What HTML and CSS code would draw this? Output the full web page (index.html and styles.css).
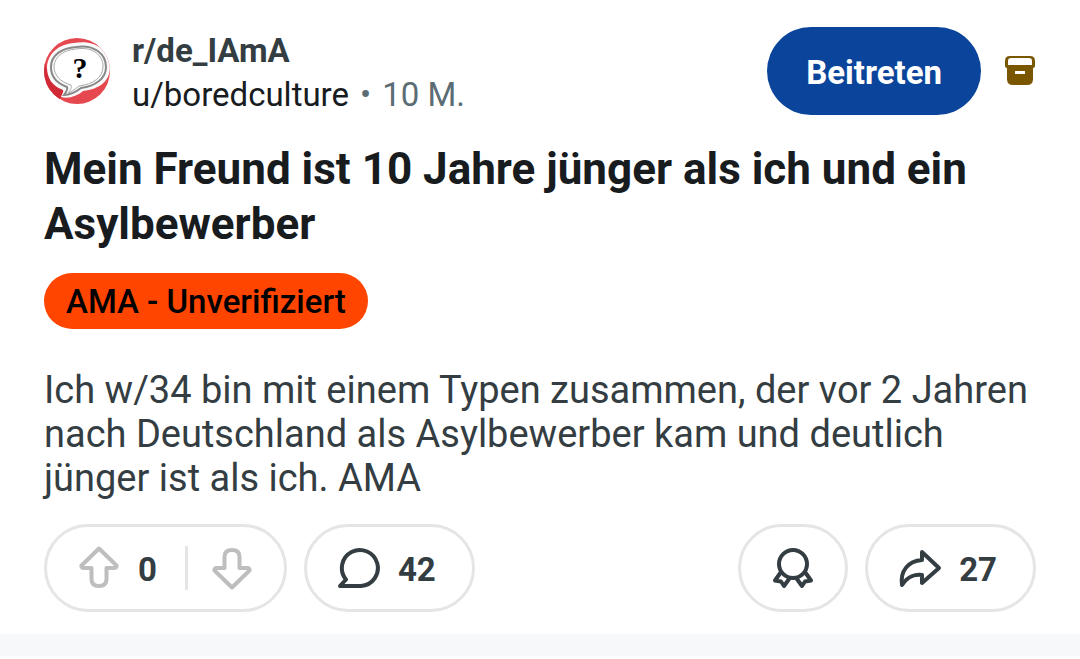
FILE: index.html
```html
<!DOCTYPE html>
<html lang="de">

<head>
    <meta charset="UTF-8">
    <meta name="viewport" content="width=device-width, initial-scale=1.0">
    <title>r/de_IAmA</title>
    <link rel="stylesheet" href="styles.css">
</head>

<body>
    <article class="post">
        <header class="post-header">
            <svg class="avatar" viewBox="0 0 66 66" aria-hidden="true">
                <defs>
                    <clipPath id="avatarClip"><circle cx="33" cy="33" r="33" /></clipPath>
                </defs>
                <g clip-path="url(#avatarClip)">
                    <rect width="66" height="66" fill="#e5484f" />
                    <path d="M0 18 Q2 44 20 52 L14 66 H0 Z" fill="#cf2a36" />
                    <path d="M30 5 C50 1 66 12 66 29 C66 43 56 51 39 53 C33 58 25 61 17 59 C18 56 20 54 19 52 C8 48 3 40 3 29 C4 15 15 6 30 5 Z" fill="#fafafa" />
                    <path d="M32 9 C50 6 62 16 62 29 C62 41 51 48 37 50 C32 54 27 57 20 57 C23 53 24 51 23 49 C12 45 7 38 7 29 C7 17 18 10 32 9 Z" fill="none" stroke="#888" stroke-width="2" />
                    <path d="M32 11 C49 8 59 18 59 28 C59 40 49 46 35 48 C30 52 27 54 24 55 C27 52 28 49 27 47 C16 44 10 37 10 28 C11 18 20 12 32 11 Z" fill="#fff" stroke="#aaa" stroke-width="1" />
                </g>
                <text class="avatar-mark" x="36" y="40" text-anchor="middle">?</text>
            </svg>
            <div class="post-meta">
                <a class="community" href="#">r/de_IAmA</a>
                <div class="byline">
                    <a class="author" href="#">u/boredculture</a>
                    <span class="dot">•</span>
                    <span class="age">10 M.</span>
                </div>
            </div>
            <button class="join">Beitreten</button>
            <svg class="archive" viewBox="0 0 30 30" aria-label="Archiviert">
                <path fill="#7a5600" fill-rule="evenodd" d="M5 0 H25 Q30 0 30 5 V10 Q30 12 28 12 V23 Q28 29 22 29 H8 Q2 29 2 23 V12 Q0 12 0 10 V5 Q0 0 5 0 Z M6 2 Q3 2 3 5 V9 H27 V5 Q27 2 24 2 Z M10 15 V18 H20 V15 Z" />
            </svg>
        </header>

        <h1 class="title">Mein Freund ist 10 Jahre jünger als ich und ein Asylbewerber</h1>
        <span class="flair">AMA - Unverifiziert</span>
        <p class="text">Ich w/34 bin mit einem Typen zusammen, der vor 2 Jahren nach Deutschland als Asylbewerber kam und deutlich jünger ist als ich. AMA</p>

        <footer class="actions">
            <div class="pill votes">
                <button class="vote" aria-label="Upvote">
                    <svg class="icon" viewBox="0 0 44 44">
                        <path d="M22 2.500 L39.500 19.500 Q40 22 37 22 H29.500 V33 Q29.500 40 22 40 Q14.500 40 14.500 33 V22 H7 Q4 22 4.500 19.500 Z" />
                    </svg>
                </button>
                <span class="count">0</span>
                <span class="divider"></span>
                <button class="vote" aria-label="Downvote">
                    <svg class="icon" viewBox="0 0 44 44">
                        <path d="M22 41.500 L39.500 24.500 Q40 22 37 22 H29.500 V11 Q29.500 4 22 4 Q14.500 4 14.500 11 V22 H7 Q4 22 4.500 24.500 Z" />
                    </svg>
                </button>
            </div>
            <button class="pill comments">
                <svg class="icon" viewBox="0 0 44 44" aria-hidden="true">
                    <path d="M24 40 H3 L9 33.500 A18 18 0 1 1 24 40 Z" />
                </svg>
                <span class="count">42</span>
            </button>
            <button class="pill award" aria-label="Auszeichnen">
                <svg class="icon" viewBox="0 0 44 44">
                    <circle cx="22" cy="18" r="14" />
                    <path d="M10 26 L4 34.500 L10 35.500 L13 40 L19.500 31 M34 26 L40 34.500 L34 35.500 L31 40 L24.500 31" />
                </svg>
            </button>
            <button class="pill share">
                <svg class="icon" viewBox="0 0 44 44" aria-hidden="true">
                    <path d="M24 6 L41 22 L24 37 V29 C17 28 9 31 4 39 C2 25 10 15 24 14 Z" />
                </svg>
                <span class="count">27</span>
            </button>
        </footer>
    </article>
    <div class="separator"></div>
</body>

</html>
```
FILE: styles.css
```css
* {
    box-sizing: border-box;
}

body {
    margin: 0;
    background-color: #fff;
    color: #333d42;
    font-family: Roboto, sans-serif;
}

a {
    color: inherit;
    text-decoration: none;
}

button {
    font-family: inherit;
    color: inherit;
    background: none;
    border: none;
    padding: 0;
    cursor: pointer;
}

.post {
    padding: 25px 44px 22px;
}

.post-header {
    display: flex;
    align-items: center;
}

.avatar {
    width: 66px;
    height: 66px;
    margin-right: 22px;
}

.avatar-mark {
    font-family: "Liberation Serif", serif;
    font-size: 30px;
    font-weight: bold;
    fill: #000;
}

.post-meta {
    flex: 1;
    padding-top: 4px;
    font-size: 33px;
    line-height: 44px;
}

.community {
    font-weight: 700;
}

.byline {
    display: flex;
    gap: 11px;
    color: #5c6c74;
}

.author {
    color: #181c1f;
}

.join {
    height: 88px;
    padding: 2px 39px 0;
    border-radius: 44px;
    background-color: #0a449b;
    color: #fff;
    font-size: 33px;
    font-weight: 700;
}

.archive {
    width: 30px;
    height: 30px;
    margin: 0 1px 0 24px;
}

.title {
    margin: 25px 0 21px;
    color: #181c1f;
    font-size: 44px;
    line-height: 55px;
    font-weight: 700;
}

.flair {
    display: block;
    width: fit-content;
    padding: 2px 22px 0;
    border-radius: 28px;
    background-color: #ff4500;
    color: #000;
    font-size: 33px;
    line-height: 54px;
    font-weight: 500;
}

.text {
    margin: 39px 0 24px;
    font-size: 38px;
    line-height: 44px;
}

.actions {
    display: flex;
    gap: 17px;
}

.pill {
    display: flex;
    align-items: center;
    height: 88px;
    padding: 0 36px 0 30px;
    border: 3px solid #e5e5e5;
    border-radius: 44px;
    font-size: 33px;
    font-weight: 700;
    gap: 17px;
}

.votes,
.award {
    padding: 0 30px;
}

.count {
    padding-top: 2px;
}

.icon {
    display: block;
    width: 44px;
    height: 44px;
    fill: none;
    stroke: #333d42;
    stroke-width: 4;
    stroke-linejoin: round;
}

.vote .icon {
    stroke: #bebebe;
}

.divider {
    width: 3px;
    height: 44px;
    margin: 0 5px 0 11px;
    background-color: #e5e5e5;
}

.award {
    margin-left: auto;
}

.separator {
    height: 22px;
    background-color: #f6f8fa;
}
```
